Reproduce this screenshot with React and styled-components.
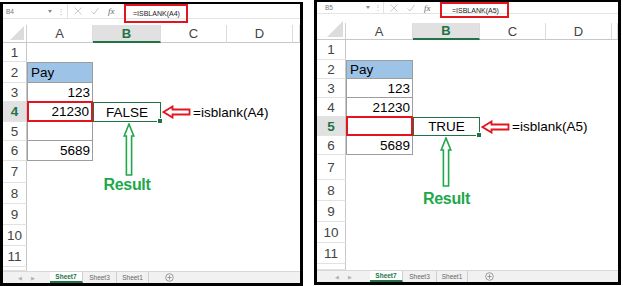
import React from 'react';
import styled, { createGlobalStyle } from 'styled-components';

const GlobalStyle = createGlobalStyle`
  html, body { margin: 0; padding: 0; background: #fff; }
  body { width: 623px; height: 286px; overflow: hidden; font-family: "Liberation Sans", Arial, sans-serif; }
`;

const GREEN_XL = '#217346';
const RED = '#e3141c';
const ANNO_GREEN = '#20a84a';

const Page = styled.div`
  display: flex;
  align-items: flex-start;
  width: 623px;
  height: 286px;
`;

const Panel = styled.div`
  flex: none;
  box-sizing: border-box;
  width: ${p => p.$w}px;
  height: ${p => p.$h}px;
  margin-top: ${p => p.$mt}px;
  margin-left: ${p => p.$ml}px;
  border: 3px solid #000;
  border-top-width: 2px;
  display: flex;
  flex-direction: column;
  background: #fff;
  overflow: hidden;
`;

const FormulaBar = styled.div`
  flex: none;
  box-sizing: border-box;
  height: ${p => p.$h}px;
  display: flex;
  align-items: flex-start;
  border-bottom: 1px solid #e4e4e4;
`;

const NameBox = styled.div`
  flex: none;
  box-sizing: border-box;
  width: ${p => p.$w}px;
  height: 100%;
  padding-left: ${p => p.$pl}px;
  padding-right: 3px;
  display: flex;
  align-items: center;
  justify-content: space-between;
  font-size: 6.5px;
  color: #777;
`;

const Dots = styled.div`
  flex: none;
  width: ${p => p.$w}px;
  height: 100%;
  display: flex;
  align-items: center;
  justify-content: center;
  font-size: 8px;
  color: #b5b5b5;
`;

const FxGroup = styled.div`
  flex: none;
  box-sizing: border-box;
  width: ${p => p.$w}px;
  height: 100%;
  border-left: 1px solid #e3e3e3;
  display: flex;
  align-items: center;
  justify-content: space-around;
  padding: 0 2px;
`;

const FxLabel = styled.span`
  font-family: "Liberation Serif", "Times New Roman", serif;
  font-style: italic;
  font-size: 9px;
  color: #666;
`;

const FormulaBox = styled.div`
  flex: none;
  box-sizing: border-box;
  margin-left: ${p => p.$ml}px;
  width: ${p => p.$w}px;
  height: ${p => p.$h}px;
  padding-left: ${p => p.$pl}px;
  border: 2px solid ${RED};
  display: flex;
  align-items: center;
  font-size: 7px;
  color: #222;
  white-space: nowrap;
`;

const Spacer = styled.div`
  flex: none;
  height: ${p => p.$h}px;
`;

const SheetGrid = styled.div`
  flex: none;
  display: grid;
  grid-template-columns: ${p => p.$cols};
  grid-template-rows: ${p => p.$rows};
`;

const Corner = styled.div`
  grid-column: 1;
  grid-row: 1;
  box-sizing: border-box;
  border-right: 1px solid #d0d0d0;
  border-bottom: 1px solid #c8c8c8;
  display: flex;
  align-items: flex-end;
  justify-content: flex-end;
  padding: 0 2px 2px 0;
`;

const ColHead = styled.div`
  grid-row: 1;
  grid-column: ${p => p.$col};
  box-sizing: border-box;
  border-right: 1px solid #dcdcdc;
  border-bottom: ${p => (p.$active ? `2px solid ${GREEN_XL}` : '1px solid #c8c8c8')};
  background: ${p => (p.$active ? '#e1e1e1' : '#fff')};
  color: ${p => (p.$active ? GREEN_XL : '#444')};
  font-weight: ${p => (p.$active ? 700 : 400)};
  font-size: 13px;
  display: flex;
  align-items: center;
  justify-content: center;
`;

const RowHead = styled.div`
  grid-column: 1;
  grid-row: ${p => p.$row};
  box-sizing: border-box;
  border-right: 1px solid #c8c8c8;
  border-bottom: 1px solid #e2e2e2;
  background: ${p => (p.$active ? '#e1e1e1' : '#fff')};
  color: ${p => (p.$active ? GREEN_XL : '#444')};
  font-weight: ${p => (p.$active ? 700 : 400)};
  font-size: 13.5px;
  display: flex;
  align-items: center;
  justify-content: center;
`;

const DataCell = styled.div`
  grid-column: 2;
  grid-row: ${p => p.$row};
  box-sizing: border-box;
  border: 1px solid #9d9d9d;
  border-top-width: ${p => (p.$first ? 1 : 0)}px;
  ${p => p.$mark && `border: 2px solid ${RED}; margin-top: -1px;`}
  background: ${p => (p.$head ? '#9dc3e6' : 'transparent')};
  display: flex;
  align-items: center;
  justify-content: ${p => (p.$head ? 'flex-start' : 'flex-end')};
  padding: 0 ${p => (p.$head ? 0 : 2)}px 0 ${p => (p.$head ? 3 : 0)}px;
  font-size: 13.5px;
  color: #000;
`;

const ResultCell = styled.div`
  grid-column: 3;
  grid-row: ${p => p.$row};
  position: relative;
  box-sizing: border-box;
  border: 1px solid ${GREEN_XL};
  display: flex;
  align-items: center;
  justify-content: center;
  font-size: 13.5px;
  color: #000;
`;

const Handle = styled.span`
  position: absolute;
  right: -3px;
  bottom: -3px;
  width: 4px;
  height: 4px;
  background: ${GREEN_XL};
  border: 1px solid #fff;
`;

const Note = styled.div`
  grid-column: 4 / -1;
  grid-row: ${p => p.$row};
  display: flex;
  align-items: center;
  gap: 2px;
  padding-left: 1px;
  font-size: 13.5px;
  color: #000;
  white-space: nowrap;
  z-index: 1;
`;

const Callout = styled.div`
  grid-column: 3;
  grid-row: ${p => p.$row} / span 4;
  display: flex;
  flex-direction: column;
  align-items: center;
  padding-top: 1px;
  z-index: 1;
`;

const UpArrow = styled.svg`
  display: block;
  margin-left: ${p => p.$dx}px;
`;

const ResultText = styled.div`
  font-size: 16px;
  line-height: 16px;
  font-weight: 700;
  letter-spacing: -0.3px;
  color: ${ANNO_GREEN};
  margin-top: ${p => p.$mt}px;
`;

const TabBar = styled.div`
  flex: none;
  box-sizing: border-box;
  height: ${p => p.$h}px;
  margin-top: auto;
  display: flex;
  align-items: stretch;
  background: #f1f1f1;
  border-top: 1px solid #d8d8d8;
`;

const Nav = styled.div`
  flex: none;
  width: ${p => p.$w}px;
  display: flex;
  align-items: center;
  justify-content: center;
  gap: 9px;
  font-size: 5px;
  color: #b0b0b0;
`;

const Tab = styled.div`
  flex: none;
  box-sizing: border-box;
  width: ${p => p.$w}px;
  display: flex;
  align-items: center;
  justify-content: center;
  font-size: 6.5px;
  border-right: 1px solid #cfcfcf;
  background: ${p => (p.$active ? '#fff' : 'transparent')};
  color: ${p => (p.$active ? GREEN_XL : '#666')};
  font-weight: ${p => (p.$active ? 700 : 400)};
  border-bottom: ${p => (p.$active ? `2px solid ${GREEN_XL}` : '0')};
`;

const AddTab = styled.div`
  flex: none;
  margin-left: ${p => p.$ml}px;
  display: flex;
  align-items: center;
`;

const Caret = () => (
  <svg width="4" height="3" viewBox="0 0 4 3"><path d="M0 0 L4 0 L2 3 Z" fill="#888" /></svg>
);

const CrossIcon = () => (
  <svg width="8" height="8" viewBox="0 0 8 8"><path d="M0.5 0.5 L7.5 7.5 M7.5 0.5 L0.5 7.5" stroke="#c4c4c4" strokeWidth="0.9" /></svg>
);

const CheckIcon = () => (
  <svg width="8" height="8" viewBox="0 0 8 8"><path d="M0.5 4.5 L3 7 L7.5 0.8" stroke="#c4c4c4" strokeWidth="0.9" fill="none" /></svg>
);

const CornerTriangle = ({ size }) => (
  <svg width={size} height={size} viewBox="0 0 10 10"><path d="M10 0 L10 10 L0 10 Z" fill="#dcdcdc" /></svg>
);

const LeftArrow = () => (
  <svg width="29" height="14" viewBox="0 0 29 14">
    <path d="M1.5 7 L10.5 1.5 L10.5 4.5 L27.5 4.5 L27.5 9.5 L10.5 9.5 L10.5 12.5 Z" fill="#fff" stroke={RED} strokeWidth="1.8" strokeLinejoin="miter" />
  </svg>
);

const GreenUp = ({ len, dx }) => (
  <UpArrow $dx={dx} width="12" height={len} viewBox={`0 0 12 ${len}`}>
    <path d={`M6 1 L10.8 13 L8.6 13 L8.6 ${len - 1} L3.4 ${len - 1} L3.4 13 L1.2 13 Z`} fill="#fff" stroke={ANNO_GREEN} strokeWidth="1.6" />
  </UpArrow>
);

const PlusCircle = () => (
  <svg width="9" height="9" viewBox="0 0 9 9">
    <circle cx="4.5" cy="4.5" r="3.8" fill="none" stroke="#888" strokeWidth="0.8" />
    <path d="M4.5 2.5 V6.5 M2.5 4.5 H6.5" stroke="#888" strokeWidth="0.8" />
  </svg>
);

const panels = [
  {
    key: 'left',
    panel: { w: 303, h: 284, mt: 2, ml: 0 },
    bar: { h: 15, nameW: 52, namePl: 3, dotsW: 12, fxW: 54, boxMl: 3, boxW: 64, boxH: 19, boxPl: 7, gap: 6 },
    name: 'B4',
    formula: '=ISBLANK(A4)',
    cols: [24, 66, 68, 66, 66, 7],
    rows: [18, 19, 21, 19, 20, 19, 20, 22, 21, 21, 21, 21, 4],
    active: 4,
    result: 'FALSE',
    note: '=isblank(A4)',
    arrow: { len: 53, dx: 3, textMt: 1 },
    tabs: { h: 12, navW: 47, widths: [33, 34, 32], addMl: 16 },
    cornerSize: 14,
  },
  {
    key: 'right',
    panel: { w: 307, h: 285, mt: 0, ml: 11 },
    bar: { h: 12, nameW: 56, namePl: 8, dotsW: 10, fxW: 54, boxMl: 3, boxW: 69, boxH: 16, boxPl: 10, gap: 9 },
    name: 'B5',
    formula: '=ISBLANK(A5)',
    cols: [29, 67, 67, 66, 66, 6],
    rows: [17, 20, 19, 19, 19, 19, 19, 25, 21, 21, 21, 21, 6],
    active: 5,
    result: 'TRUE',
    note: '=isblank(A5)',
    arrow: { len: 50, dx: -2, textMt: 4 },
    tabs: { h: 12, navW: 53, widths: [33, 34, 31], addMl: 17 },
    cornerSize: 16,
  },
];

const colLetters = ['A', 'B', 'C', 'D', ''];
const colA = { 2: 'Pay', 3: '123', 4: '21230', 5: '', 6: '5689' };
const colAValues = ['Pay', '123', '21230', '', '5689'];

function ExcelShot({ cfg }) {
  const { panel, bar, tabs, active } = cfg;
  const rowNums = Array.from({ length: 12 }, (_, i) => i + 1);
  const aValues = colAValues.map((v, i) => (i + 2 === active ? (active === 4 ? '21230' : '') : v));
  return (
    <Panel $w={panel.w} $h={panel.h} $mt={panel.mt} $ml={panel.ml}>
      <FormulaBar $h={bar.h}>
        <NameBox $w={bar.nameW} $pl={bar.namePl}>
          <span>{cfg.name}</span>
          <Caret />
        </NameBox>
        <Dots $w={bar.dotsW}>⋮</Dots>
        <FxGroup $w={bar.fxW}>
          <CrossIcon />
          <CheckIcon />
          <FxLabel>fx</FxLabel>
        </FxGroup>
        <FormulaBox $ml={bar.boxMl} $w={bar.boxW} $h={bar.boxH} $pl={bar.boxPl}>
          {cfg.formula}
        </FormulaBox>
      </FormulaBar>
      <Spacer $h={bar.gap} />
      <SheetGrid
        $cols={cfg.cols.map(c => `${c}px`).join(' ')}
        $rows={cfg.rows.map(r => `${r}px`).join(' ')}
      >
        <Corner>
          <CornerTriangle size={cfg.cornerSize} />
        </Corner>
        {colLetters.map((l, i) => (
          <ColHead key={i} $col={i + 2} $active={l === 'B'}>{l}</ColHead>
        ))}
        {rowNums.map(n => (
          <RowHead key={n} $row={n + 1} $active={n === active}>{n <= 11 ? n : ''}</RowHead>
        ))}
        {aValues.map((v, i) => {
          const r = i + 2;
          return (
            <DataCell key={r} $row={r + 1} $first={r === 2} $head={r === 2} $mark={r === active}>
              {v}
            </DataCell>
          );
        })}
        <ResultCell $row={active + 1}>
          {cfg.result}
          <Handle />
        </ResultCell>
        <Note $row={active + 1}>
          <LeftArrow />
          <span>{cfg.note}</span>
        </Note>
        <Callout $row={active + 2}>
          <GreenUp len={cfg.arrow.len} dx={cfg.arrow.dx} />
          <ResultText $mt={cfg.arrow.textMt}>Result</ResultText>
        </Callout>
      </SheetGrid>
      <TabBar $h={tabs.h}>
        <Nav $w={tabs.navW}>
          <span>◀</span>
          <span>▶</span>
        </Nav>
        {['Sheet7', 'Sheet3', 'Sheet1'].map((t, i) => (
          <Tab key={t} $w={tabs.widths[i]} $active={i === 0}>{t}</Tab>
        ))}
        <AddTab $ml={tabs.addMl}>
          <PlusCircle />
        </AddTab>
      </TabBar>
    </Panel>
  );
}

export default function App() {
  return (
    <>
      <GlobalStyle />
      <Page>
        {panels.map(cfg => (
          <ExcelShot key={cfg.key} cfg={cfg} />
        ))}
      </Page>
    </>
  );
}
